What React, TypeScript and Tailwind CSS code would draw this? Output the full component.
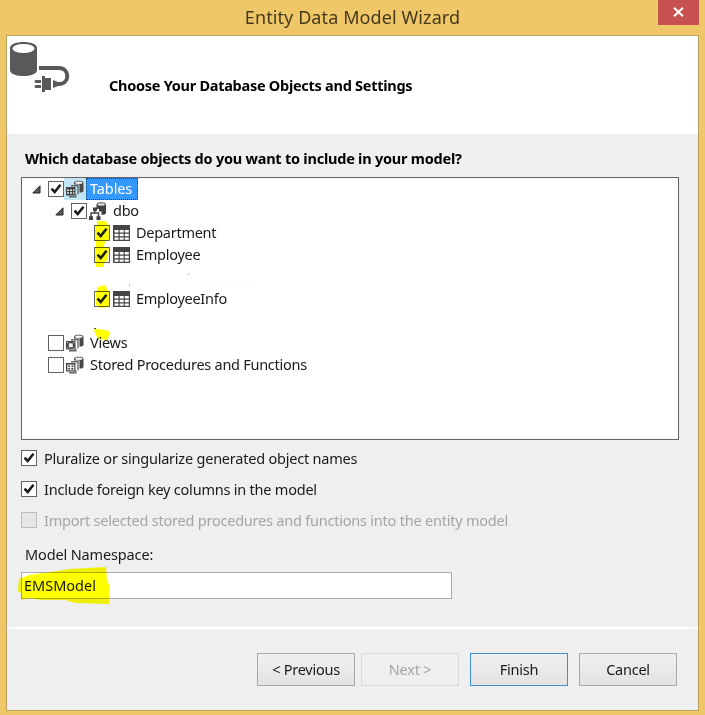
import clsx from "clsx";
import { useState, type ReactNode } from "react";

type IconKind = "tables" | "schema" | "table" | "views" | "procs";

export default function App() {
  const [pluralize, setPluralize] = useState(true);
  const [foreignKeys, setForeignKeys] = useState(true);
  const [namespace, setNamespace] = useState("EMSModel");

  return (
    <div className="flex h-[715px] w-[705px] flex-col overflow-hidden bg-[#efc768] pr-1.5 pb-1 pl-1.5 font-['Noto_Sans','Open_Sans',sans-serif] text-[14.5px] text-[#1a1a1a]">
      <header className="relative flex h-[35px] shrink-0 items-start justify-center">
        <h1 className="text-[18px] leading-[34px] tracking-[0.1px] whitespace-nowrap text-[#45391c]">Entity Data Model Wizard</h1>
        <button aria-label="Close" className="absolute top-0 right-0 flex h-[25px] w-[41px] items-center justify-center bg-[#c75050]">
          <svg className="mt-[-2px]" width="11" height="10" viewBox="0 0 11 10" stroke="#fff" strokeWidth="2">
            <path d="M1 .7 10 9.3M10 .7 1 9.3" />
          </svg>
        </button>
      </header>

      <main className="flex flex-1 flex-col border border-[#b9a05c] bg-[#efefef]">
        <section className="flex h-[98px] shrink-0 bg-white">
          <DatabasePlugIcon />
          <h2 className="mt-[39px] ml-[38px] text-[14.5px] leading-5 font-bold tracking-[-0.27px] whitespace-nowrap text-black">Choose Your Database Objects and Settings</h2>
        </section>

        <section className="flex h-[493px] shrink-0 flex-col pr-[19px] pl-[14px]">
          <h3 className="mt-[14px] ml-1 h-[29px] text-[14.5px] leading-5 font-bold tracking-[-0.23px] whitespace-nowrap text-black">Which database objects do you want to include in your model?</h3>

          <div className="h-[263px] w-[658px] shrink-0 border border-[#646464] bg-white">
            <TreeRow indent="pl-[10px]" icon="tables" label="Tables" expanded checked selected />
            <TreeRow indent="pl-[33px]" icon="schema" label="dbo" expanded checked />
            <TreeRow indent="pl-[72px]" icon="table" label="Department" checked mark={<HighlightTop />} />
            <TreeRow indent="pl-[72px]" icon="table" label="Employee" checked mark={<HighlightBottom />} />
            <div className="h-[22px]">
              <svg width="240" height="22">
                <path d="M166 8h1M107 19h1" stroke="#777" />
                <path d="M178 17h54" stroke="#f7f7f7" />
              </svg>
            </div>
            <TreeRow indent="pl-[72px]" icon="table" label="EmployeeInfo" checked mark={<HighlightSingle />} />
            <div className="relative h-[22px]">
              <svg className="absolute top-[18px] left-[72px] z-10 mix-blend-multiply" width="17" height="14">
                <path d="M0 1 5 1 10 2 15 3 15 8 13 12 4 11 2 7 1 5Z" fill="#ff0" />
                <path d="M0 .5h2" stroke="#555" />
              </svg>
            </div>
            <TreeRow indent="pl-[26px]" icon="views" label="Views" />
            <TreeRow indent="pl-[26px]" icon="procs" label="Stored Procedures and Functions" />
          </div>

          <Option label="Pluralize or singularize generated object names" className="mt-[2px]" checked={pluralize} onChange={() => setPluralize(!pluralize)} />
          <Option label="Include foreign key columns in the model" checked={foreignKeys} onChange={() => setForeignKeys(!foreignKeys)} />
          <Option label="Import selected stored procedures and functions into the entity model" disabled />

          <label htmlFor="namespace" className="mt-[9px] ml-1 h-[28px] text-[14.5px] leading-5 tracking-[-0.14px]">Model Namespace:</label>
          <div className="relative w-[431px]">
            <input id="namespace" value={namespace} onChange={(event) => setNamespace(event.target.value)} className="block h-[27px] w-full border border-[#ababab] bg-white px-0.5 pb-px text-[14.5px] tracking-[0px] outline-none" />
            <svg className="pointer-events-none absolute -top-[6px] -left-[4px] mix-blend-multiply" width="94" height="40">
              <path d="M2 13 12 9 34 6 53 3 89 1 90 16 92 18 92 38 59 37 48 34 24 34 12 32 4 34 4 27 1 25Z" fill="#ff0" />
            </svg>
          </div>
        </section>

        <footer className="flex flex-1 border-t-2 border-white pt-[24px] pl-[250px]">
          <WizardButton label="< Previous" />
          <WizardButton label="Next >" className="ml-1.5" disabled />
          <WizardButton label="Finish" className="ml-[11px]" primary />
          <WizardButton label="Cancel" className="ml-[11px]" />
        </footer>
      </main>
    </div>
  );
}

function TreeRow({ indent, icon, label, expanded, checked, selected, mark }: { indent: string; icon: IconKind; label: string; expanded?: boolean; checked?: boolean; selected?: boolean; mark?: ReactNode }) {
  return (
    <div className={clsx("flex h-[22px] items-center", indent)}>
      {expanded && (
        <svg className="mr-[7px] shrink-0" width="9" height="9">
          <path d="M8 .8V8H.8Z" fill="#595959" stroke="#222" />
        </svg>
      )}
      <span className="relative flex">
        <CheckBox checked={checked} />
        {mark}
      </span>
      <span className={clsx("flex h-[22px] items-center", icon === "table" ? "w-[23px] pl-[3px]" : selected ? "w-[22px] pl-px" : "w-[23px] pl-px", selected && "bg-[#c3e6f7]")}>
        <NodeIcon kind={icon} />
      </span>
      <span className={clsx("flex h-[22px] items-center border border-dotted pb-[3px] text-[14.5px] leading-[18px] whitespace-nowrap", selected ? "border-[#1d3f66] bg-[#3399ff] pr-[5px] pl-[3px] tracking-[-0.1px] text-white" : "border-transparent pr-1 pl-[2px] tracking-[-0.27px]")}>{label}</span>
    </div>
  );
}

function CheckBox({ checked, disabled }: { checked?: boolean; disabled?: boolean }) {
  return (
    <svg className="shrink-0" width="16" height="16">
      <rect x=".5" y=".5" width="15" height="15" fill={disabled ? "#e6e6e6" : "#fff"} stroke={disabled ? "#bcbcbc" : "#626262"} />
      {checked && <path d="m3.5 7.7 3.2 3.300 5.800-7.200" fill="none" stroke="#1c1c1c" strokeWidth="2.6" />}
    </svg>
  );
}

function NodeIcon({ kind }: { kind: IconKind }) {
  if (kind === "table") {
    return (
      <svg width="17" height="16">
        <path d="M0 0h17v16H0z" fill="#454545" />
        <path d="M1.5 5h4v2.5h-4zM6.7 5h4v2.5h-4zM11.8 5h4v2.5h-4zM1.5 8.7h4v2.5h-4zM6.7 8.7h4v2.5h-4zM11.8 8.7h4v2.5h-4zM1.5 12.4h4v2.4h-4zM6.7 12.4h4v2.4h-4zM11.8 12.4h4v2.4h-4z" fill="#fff" />
      </svg>
    );
  }

  if (kind === "schema") {
    return (
      <svg width="19" height="18">
        <path d="M8.500 2.500c0-3 9.500-3 9.500 0v8.500c0 1.500-2.500 2-4.500 1.700V9.500H11V7H8.500Z" fill="#404040" />
        <ellipse cx="13.300" cy="2.400" rx="3.700" ry="1.200" fill="#e8e8e8" />
        <path d="M3 15v-4h7.500v4M6.800 8v3" fill="none" stroke="#404040" strokeWidth="1.400" />
        <path d="M5 5.500h4V9H5zM1 14.200h4V18H1zM8.500 14.200h4V18h-4z" fill="#404040" />
      </svg>
    );
  }

  return (
    <svg width="20" height="18">
      <path d="M9 2.800C9 .2 18.500.2 18.500 2.800v8c0 1.500-2 2-4 1.700V4.500H9Z" fill="#474747" />
      <ellipse cx="13.700" cy="2.700" rx="3.700" ry="1.200" fill="#f5f5f5" />
      <path d="M6 5.700h7v8.500M4 16.800h6.800V14.500" fill="none" stroke="#666" strokeWidth="1.400" />
      <path d="M1 7h9.500v8.500H1z" fill="#444" />
      {kind === "tables" && <path d="M2 9.500h2V11H2zM5 9.500h2V11H5zM8 9.500h1.500V11H8zM2 12.300h2v1.500H2zM5 12.300h2v1.500H5zM8 12.300h1.500v1.500H8z" fill="#dceef5" />}
      {kind === "views" && (
        <>
          <path d="M3.800 9.300h4v4h-4z" fill="#eee" />
          <path d="M2 8.500h1.300M8.200 8.500h1.300M2 14.100h1.300M8.200 14.100h1.300" stroke="#ddd" />
        </>
      )}
      {kind === "procs" && (
        <>
          <path d="M2.300 8.500h7v5.800h-7z" fill="#eee" />
          <path d="M3.300 9.500H5V11H3.300zM6.600 9.500h1.700V11H6.600zM3.300 12H5v1.500H3.300zM6.300 12h2v1.500h-2z" fill="#444" />
        </>
      )}
    </svg>
  );
}

function HighlightTop() {
  return (
    <svg className="absolute -top-[4px] left-0 mix-blend-multiply" width="16" height="26">
      <path d="M3 0h7l3 1v3h2v15l-4 1-1 6H2v-6H1V4h2Z" fill="#ff0" />
    </svg>
  );
}

function HighlightBottom() {
  return (
    <svg className="absolute top-0 left-0 mix-blend-multiply" width="16" height="20">
      <path d="M1 0h12l2 2-1 8-2 5-2 1v4H2v-4H1Z" fill="#ff0" />
    </svg>
  );
}

function HighlightSingle() {
  return (
    <svg className="absolute -top-[6px] left-0 mix-blend-multiply" width="16" height="24">
      <path d="M3 2 12 0l1 5 2 1v16l-10 1-1-2-2-1V6h1Z" fill="#ff0" />
    </svg>
  );
}

function DatabasePlugIcon() {
  return (
    <svg className="mt-[5px] ml-[2px] shrink-0" width="62" height="54">
      <path d="M1 7c0-8 27-8 27 0v22c0 8-27 8-27 0Z" fill="#58595b" />
      <ellipse cx="14.500" cy="7.500" rx="11" ry="4.500" fill="#fff" />
      <path d="M30 27h20c11 0 11 16 0 16h-3" fill="none" stroke="#58595b" strokeWidth="4" />
      <path d="M33 35h3v2h6v12h-6v2h-3zM44 39l5 2v4l-5 2zM27 39h5v3h-5a1.500 1.500 0 0 1 0-3zM27 44h5v3h-5a1.500 1.500 0 0 1 0-3z" fill="#58595b" />
    </svg>
  );
}

function Option({ label, checked, disabled, className, onChange }: { label: string; checked?: boolean; disabled?: boolean; className?: string; onChange?: () => void }) {
  return (
    <button type="button" role="checkbox" aria-checked={!!checked} disabled={disabled} onClick={onChange} className={clsx("flex h-[31px] shrink-0 items-center gap-[7px] text-left tracking-[-0.22px] whitespace-nowrap", disabled && "text-[#a5a5a5]", className)}>
      <CheckBox checked={checked} disabled={disabled} />
      <span className="pt-0.5">{label}</span>
    </button>
  );
}

function WizardButton({ label, disabled, primary, className }: { label: string; disabled?: boolean; primary?: boolean; className?: string }) {
  return (
    <button
      disabled={disabled}
      className={clsx(
        "h-[33px] w-[98px] border text-center text-[14.5px] tracking-[-0.25px]",
        disabled && "border-[#d8d8d8] text-[#a5a5a5]",
        !disabled && "bg-linear-to-b from-[#f0f0f0] to-[#e3e3e3]",
        !disabled && (primary ? "border-[#3f8fd6]" : "border-[#a9a9a9]"),
        className
      )}
    >
      {label}
    </button>
  );
}
